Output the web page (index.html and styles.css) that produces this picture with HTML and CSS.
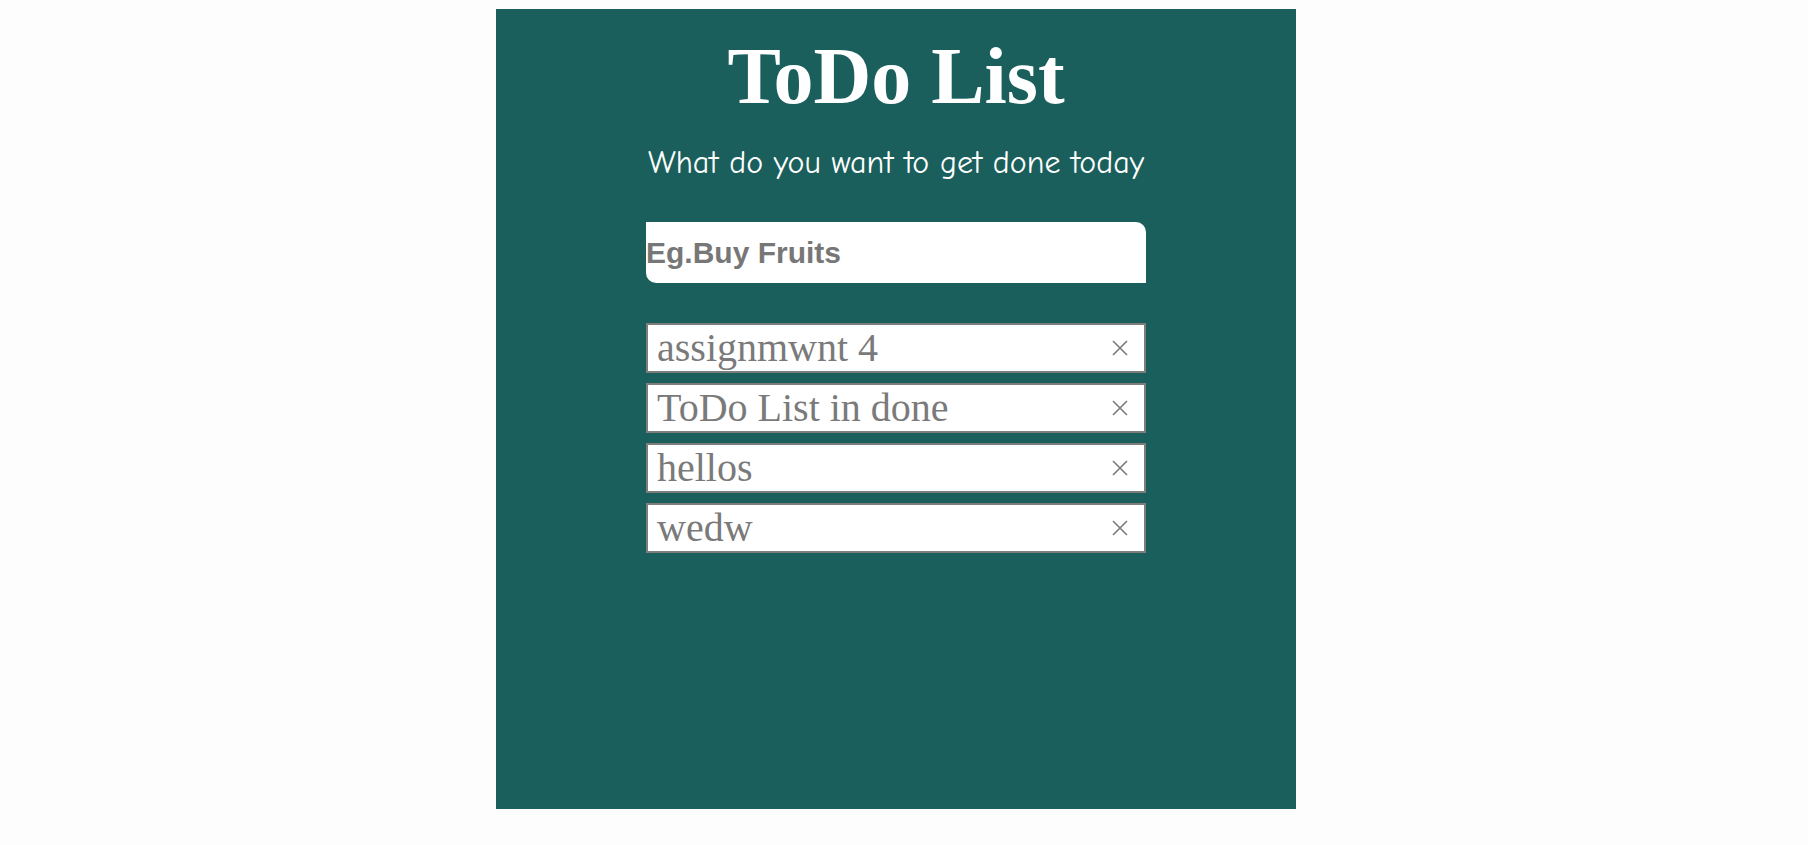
FILE: index.html
```html
<!DOCTYPE html>
<html>
<head>
<meta charset="utf-8">
<title>ToDo List</title>
<link rel="stylesheet" href="styles.css">
</head>
<body>
<div class="app">
  <h1 class="title">ToDo List</h1>
  <p class="subtitle">What do you want to get done today</p>
  <input class="new-task" type="text" placeholder="Eg.Buy Fruits">
  <ul class="tasks">
    <li class="task"><span class="task-text">assignmwnt 4</span><button class="remove" aria-label="remove"><svg width="16" height="16" viewBox="0 0 16 16"><path d="M1 1L15 15M15 1L1 15" stroke="#7a7a7a" stroke-width="1.6" fill="none"/></svg></button></li>
    <li class="task"><span class="task-text">ToDo List in done</span><button class="remove" aria-label="remove"><svg width="16" height="16" viewBox="0 0 16 16"><path d="M1 1L15 15M15 1L1 15" stroke="#7a7a7a" stroke-width="1.6" fill="none"/></svg></button></li>
    <li class="task"><span class="task-text">hellos</span><button class="remove" aria-label="remove"><svg width="16" height="16" viewBox="0 0 16 16"><path d="M1 1L15 15M15 1L1 15" stroke="#7a7a7a" stroke-width="1.6" fill="none"/></svg></button></li>
    <li class="task"><span class="task-text">wedw</span><button class="remove" aria-label="remove"><svg width="16" height="16" viewBox="0 0 16 16"><path d="M1 1L15 15M15 1L1 15" stroke="#7a7a7a" stroke-width="1.6" fill="none"/></svg></button></li>
  </ul>
</div>
</body>
</html>
```
FILE: styles.css
```css
html, body {
  margin: 0;
  padding: 0;
  background: #fdfdfd;
}
body {
  padding-top: 9px;
  font-family: "Liberation Serif", "Times New Roman", serif;
}
.app {
  width: 800px;
  height: 800px;
  margin-left: 496px;
  background: #1a5f5c;
  display: flex;
  flex-direction: column;
  align-items: center;
  box-sizing: border-box;
  padding-top: 21px;
}
.title {
  margin: 0;
  font-family: "Liberation Serif", "Times New Roman", serif;
  font-weight: bold;
  font-size: 80px;
  line-height: 92px;
  color: #ffffff;
}
.subtitle {
  margin: 22px 0 0 0;
  font-family: "Comic Sans MS", "Comic Neue", "Open Sans", sans-serif;
  font-size: 32px;
  line-height: 38px;
  color: #ffffff;
}
.new-task {
  margin-top: 40px;
  width: 500px;
  height: 61px;
  box-sizing: border-box;
  border: none;
  outline: none;
  border-radius: 0 10px 0 10px;
  padding: 0;
  font-family: "Liberation Sans", Arial, sans-serif;
  font-weight: bold;
  font-size: 30px;
  color: #777777;
  background: #ffffff;
}
.new-task::placeholder {
  color: #777777;
  opacity: 1;
}
.tasks {
  list-style: none;
  margin: 40px 0 0 0;
  padding: 0;
  width: 500px;
  display: flex;
  flex-direction: column;
  gap: 10px;
}
.task {
  display: flex;
  align-items: center;
  justify-content: space-between;
  height: 50px;
  box-sizing: border-box;
  border: 2px solid #7d7d7d;
  background: #ffffff;
  padding: 0 16px 0 9px;
}
.task-text {
  font-family: "Liberation Serif", "Times New Roman", serif;
  font-size: 40px;
  line-height: 46px;
  color: #7a7a7a;
}
.remove {
  border: none;
  background: none;
  padding: 0;
  display: flex;
  cursor: pointer;
}
```
